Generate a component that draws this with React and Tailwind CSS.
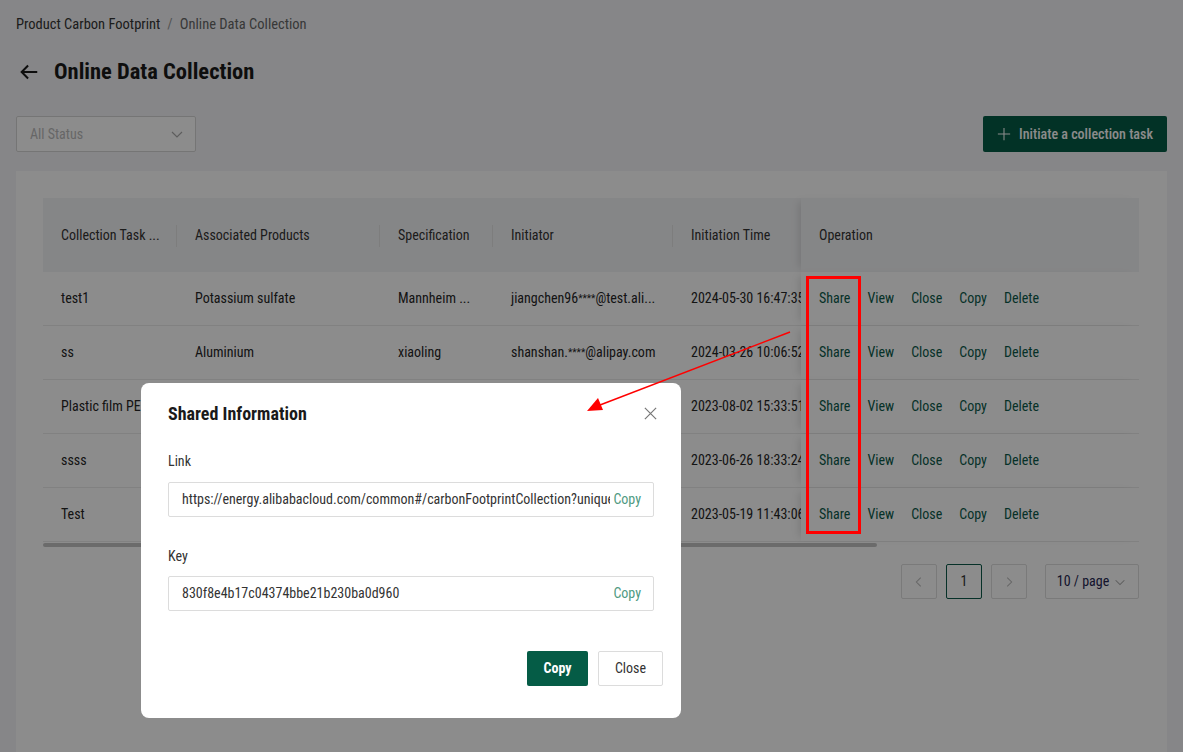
import React from 'react'

const cols = [
    { label: 'Collection Task ...', w: 'w-[134px]' },
    { label: 'Associated Products', w: 'w-[203px]' },
    { label: 'Specification', w: 'w-[113px]' },
    { label: 'Initiator', w: 'w-[180px]' },
    { label: 'Initiation Time', w: 'w-[128px]' },
]

const rows = [
    ['test1', 'Potassium sulfate', 'Mannheim ...', 'jiangchen96****@test.ali...', '2024-05-30 16:47:35'],
    ['ss', 'Aluminium', 'xiaoling', 'shanshan.****@alipay.com', '2024-03-26 10:06:52'],
    ['Plastic film PE', 'Plastic film', 'PE', 'jiangchen96****@test.ali...', '2023-08-02 15:33:51'],
    ['ssss', 'Aluminium', 'ssss', 'shanshan.****@alipay.com', '2023-06-26 18:33:24'],
    ['Test', 'Potassium sulfate', 'Test', 'shanshan.****@alipay.com', '2023-05-19 11:43:06'],
]

const ops = ['Share', 'View', 'Close', 'Copy', 'Delete']

// masked emails show the stars smaller than the text
function Masked({ text }) {
    const parts = text.split('****')
    if (parts.length < 2) return text
    return (
        <>
            {parts[0]}
            <span className="text-[10px] relative top-[-1px]">****</span>
            {parts[1]}
        </>
    )
}

function Chevron({ className }) {
    return (
        <svg viewBox="0 0 16 16" className={className} fill="none" stroke="currentColor" strokeWidth="1.2">
            <path d="M3 6l5 5 5-5" />
        </svg>
    )
}

function Table() {
    return (
        <div className="w-[1096px] relative">
            <div className="flex h-[74px] bg-[#f3f4f6] text-[14px] text-[#333]">
                {cols.map((c, i) => (
                    <div key={c.label} className={`${c.w} relative flex items-center pl-[18px] whitespace-nowrap overflow-hidden`}>
                        {c.label}
                        {i < cols.length - 1 && (
                            <span className="absolute right-0 top-[27px] h-[22px] w-px bg-[#e3e3e3]" />
                        )}
                    </div>
                ))}
                <div className="flex-1 flex items-center pl-[18px] shadow-[-6px_0_8px_-4px_rgba(0,0,0,0.12)]">Operation</div>
            </div>
            {rows.map((r, i) => (
                <div key={i} className="flex h-[54px] border-b border-[#ececec] text-[14px] text-[#262626]">
                    {r.map((cell, j) => (
                        <div key={j} className={`${cols[j].w} flex items-center pl-[18px] whitespace-nowrap overflow-hidden`}>
                            <span><Masked text={cell} /></span>
                        </div>
                    ))}
                    <div className="flex-1 flex items-center gap-[17px] pl-[18px] bg-white text-[#0b5a4a] shadow-[-6px_0_8px_-4px_rgba(0,0,0,0.12)]">
                        {ops.map((o) => (
                            <span key={o}>{o}</span>
                        ))}
                    </div>
                </div>
            ))}
            <div className="h-[5px] flex items-center">
                <div className="h-[4px] w-[834px] rounded-full bg-[#c4c4c4]" />
            </div>
        </div>
    )
}

function Pagination() {
    return (
        <div className="flex justify-end items-center gap-[9px] mt-[17px] mr-[1px] text-[14px] text-[#333]">
            <div className="w-[36px] h-[35px] border border-[#dedede] rounded-[2px] flex items-center justify-center text-[#bbb]">
                <svg viewBox="0 0 16 16" className="w-[14px] h-[14px]" fill="none" stroke="currentColor" strokeWidth="1.2"><path d="M10 3L5 8l5 5" /></svg>
            </div>
            <div className="w-[36px] h-[35px] border border-[#0b5a4a] rounded-[2px] flex items-center justify-center">1</div>
            <div className="w-[36px] h-[35px] border border-[#dedede] rounded-[2px] flex items-center justify-center text-[#bbb]">
                <svg viewBox="0 0 16 16" className="w-[14px] h-[14px]" fill="none" stroke="currentColor" strokeWidth="1.2"><path d="M6 3l5 5-5 5" /></svg>
            </div>
            <div className="ml-[9px] w-[94px] h-[35px] border border-[#dedede] rounded-[2px] flex items-center justify-center gap-[4px] text-[#262650]">
                10 / page
                <Chevron className="w-[14px] h-[14px] text-[#aaa]" />
            </div>
        </div>
    )
}

function ShareModal() {
    return (
        <div className="absolute left-[141px] top-[383px] w-[540px] h-[335px] bg-white rounded-[8px] px-[27px] pt-[18px] flex flex-col">
            <div className="flex items-center justify-between h-[24px]">
                <span className="text-[18px] font-bold text-[#1a1a1a]">Shared Information</span>
                <svg viewBox="0 0 16 16" className="w-[15px] h-[15px] mr-[-4px] text-[#777]" fill="none" stroke="currentColor" strokeWidth="1.3">
                    <path d="M2 2l12 12M14 2L2 14" />
                </svg>
            </div>
            <div className="mt-[26px] text-[14px] text-[#333] leading-[20px]">Link</div>
            <div className="mt-[11px] h-[35px] border border-[#dcdcdc] rounded-[2px] flex items-center pl-[13px] pr-[12px] text-[14px]">
                <span className="flex-1 overflow-hidden whitespace-nowrap text-[#333]">https://energy.alibabacloud.com/common#/carbonFootprintCollection?uniqueKey=830f8e4b17c04374bbe21b230ba0d960</span>
                <span className="ml-[3px] text-[#4f9a82]">Copy</span>
            </div>
            <div className="mt-[29px] text-[14px] text-[#333] leading-[20px]">Key</div>
            <div className="mt-[10px] h-[35px] border border-[#dcdcdc] rounded-[2px] flex items-center pl-[13px] pr-[12px] text-[14px]">
                <span className="flex-1 text-[#333]">830f8e4b17c04374bbe21b230ba0d960</span>
                <span className="text-[#4f9a82]">Copy</span>
            </div>
            <div className="mt-[40px] mr-[-9px] flex justify-end gap-[10px]">
                <button className="w-[61px] h-[35px] rounded-[2px] bg-[#055c46] text-white text-[14px] font-bold">Copy</button>
                <button className="w-[65px] h-[35px] rounded-[2px] border border-[#dcdcdc] text-[#333] text-[14px]">Close</button>
            </div>
        </div>
    )
}

export default function App() {
    return (
        <div className="relative w-full h-[752px] overflow-hidden bg-[#f4f5f7] font-['Roboto_Condensed',Roboto,sans-serif] [font-stretch:condensed]">
            <div className="px-4 pt-[15px] text-[14.5px] leading-[20px]">
                <span className="text-[#333]">Product Carbon Footprint</span>
                <span className="text-[#999] mx-[7px]">/</span>
                <span className="text-[#666]">Online Data Collection</span>
            </div>
            <div className="flex items-center gap-[14px] px-[18px] mt-[23px] h-[28px]">
                <svg viewBox="0 0 24 24" className="w-[22px] h-[22px] text-[#1a1a1a]" fill="none" stroke="currentColor" strokeWidth="2.2">
                    <path d="M21 12H4M11 5l-7 7 7 7" />
                </svg>
                <h1 className="text-[22.5px] font-bold text-[#1a1a1a]">Online Data Collection</h1>
            </div>
            <div className="flex justify-between items-center px-4 mt-[30px]">
                <div className="w-[180px] h-[36px] border border-[#d6d6d6] rounded-[2px] bg-white flex items-center justify-between pl-[13px] pr-[10px] text-[14px] text-[#bbb]">
                    All Status
                    <Chevron className="w-[16px] h-[16px] text-[#aaa]" />
                </div>
                <button className="w-[184px] h-[36px] rounded-[2px] bg-[#055c46] text-white text-[14px] font-medium flex items-center justify-center gap-[8px]">
                    <svg viewBox="0 0 16 16" className="w-[14px] h-[14px]" fill="none" stroke="currentColor" strokeWidth="1.2"><path d="M8 1v14M1 8h14" /></svg>
                    Initiate a collection task
                </button>
            </div>
            <div className="mx-4 mt-[19px] bg-white p-[27px] h-[600px]">
                <Table />
                <Pagination />
            </div>

            <div className="absolute inset-0 bg-black/45" />
            <ShareModal />
            <svg className="absolute inset-0 w-full h-full pointer-events-none" viewBox="0 0 1183 752">
                <rect x="807.5" y="277.5" width="52" height="255" fill="none" stroke="#ff0000" strokeWidth="3" />
                <line x1="790" y1="332" x2="600" y2="405" stroke="#ff0000" strokeWidth="1.5" />
                <path d="M587 411 L598 398 L603 410 Z" fill="#ff0000" />
            </svg>
        </div>
    )
}
